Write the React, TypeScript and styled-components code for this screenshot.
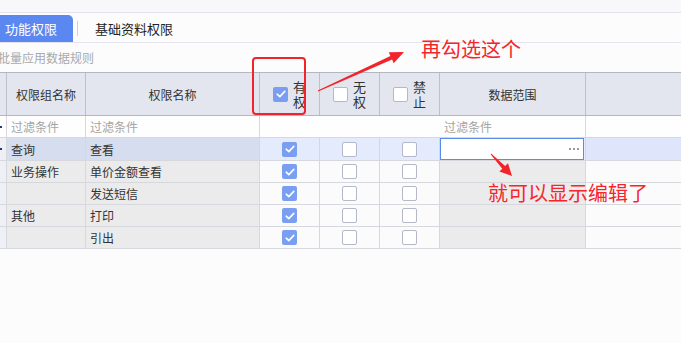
import React from 'react';
import styled, { createGlobalStyle } from 'styled-components';

const GlobalStyle = createGlobalStyle`
  html, body {
    margin: 0;
    padding: 0;
    background: #fcfcfc;
  }
  body {
    font-family: "Noto Sans CJK SC", "Noto Sans", "Liberation Sans", sans-serif;
    color: #333;
  }
`;

const COLS = '7px 79px 174px 60px 60px 60px 146px 1fr';

const Page = styled.div`
  position: relative;
  width: 681px;
  height: 343px;
  overflow: hidden;
  background: #fcfcfc;
`;

const TopStrip = styled.div`
  height: 12px;
  background: #f8f8fa;
  border-bottom: 1px solid #e2e3ec;
`;

const TabBar = styled.div`
  height: 29px;
  display: flex;
  align-items: flex-end;
  border-bottom: 1px solid #e4e5ee;
`;

const Tab = styled.div<{ $active?: boolean }>`
  height: 27px;
  display: flex;
  align-items: center;
  box-sizing: border-box;
  font-size: 13px;
  padding: ${p => (p.$active ? '0 0 0 5px' : '0 0 0 17px')};
  width: ${p => (p.$active ? '73px' : 'auto')};
  color: ${p => (p.$active ? '#fff' : '#222')};
  background: ${p => (p.$active ? '#5b88f0' : 'transparent')};
  border-top-right-radius: ${p => (p.$active ? '5px' : '0')};
`;

const TabDivider = styled.div`
  width: 1px;
  height: 15px;
  margin: 0 0 6px 4px;
  background: #cdd1dc;
`;

const Toolbar = styled.div`
  height: 29px;
  display: flex;
  align-items: center;
  font-size: 12px;
  color: #a9a9a9;
  margin-left: -2px;
`;

const Table = styled.div`
  border-top: 1px solid #b3b7c2;
`;

const HeaderRow = styled.div`
  display: grid;
  grid-template-columns: ${COLS};
  height: 43px;
  box-sizing: border-box;
  background: #e3e6ee;
  border-bottom: 1px solid #b3b7c2;
`;

const HeaderCell = styled.div`
  display: flex;
  align-items: center;
  justify-content: center;
  gap: 5px;
  font-size: 12px;
  color: #333;
  border-right: 1px solid #bcc0ca;
  &:last-child {
    border-right: none;
  }
`;

const StackedLabel = styled.span`
  width: 13px;
  font-size: 13px;
  line-height: 15px;
  word-break: break-all;
`;

type Tone = 'lead' | 'group' | 'check' | 'scope' | 'plain' | 'filter';

const toneBg: Record<Tone, [string, string]> = {
  lead: ['#eef0f5', '#eef0f5'],
  group: ['#ebebeb', '#d6ddef'],
  check: ['#fbfbfb', '#e4ebfc'],
  scope: ['#ebebeb', '#e4ebfc'],
  plain: ['#fbfbfb', '#dfe6fb'],
  filter: ['#fefefe', '#fefefe'],
};

const Row = styled.div<{ $height?: number }>`
  display: grid;
  grid-template-columns: ${COLS};
  height: ${p => p.$height ?? 22}px;
  box-sizing: border-box;
  border-bottom: 1px solid #d6d8de;
`;

const Cell = styled.div<{ $tone: Tone; $selected?: boolean; $open?: boolean; $center?: boolean }>`
  position: relative;
  display: flex;
  align-items: center;
  justify-content: ${p => (p.$center ? 'center' : 'flex-start')};
  padding-left: ${p => (p.$center ? '0' : '4px')};
  font-size: 12px;
  color: ${p => (p.$tone === 'filter' ? '#a4a4a4' : '#333')};
  background: ${p => toneBg[p.$tone][p.$selected ? 1 : 0]};
  border-right: 1px solid ${p => (p.$open ? 'transparent' : '#d6d8de')};
  &:last-child {
    border-right: none;
  }
`;

const Marker = styled.span`
  position: absolute;
  left: 0;
  top: 50%;
  width: 2px;
  height: 2px;
  margin-top: -1px;
  background: #1f3b74;
`;

const Box = styled.span<{ $checked?: boolean }>`
  box-sizing: border-box;
  width: 15px;
  height: 15px;
  border-radius: 2px;
  display: inline-flex;
  align-items: center;
  justify-content: center;
  background: ${p => (p.$checked ? '#7a9ef1' : '#fff')};
  border: ${p => (p.$checked ? 'none' : '1px solid #b4b8c8')};
`;

const ScopeInput = styled.div`
  position: absolute;
  inset: 0 1px 0 0;
  box-sizing: border-box;
  background: #fff;
  border: 1px solid #5b8ae8;
  display: flex;
  align-items: center;
  justify-content: flex-end;
  gap: 2px;
  padding-right: 4px;
`;

const Dot = styled.span`
  width: 2px;
  height: 2px;
  background: #9a9a9a;
`;

const Annotations = styled.div`
  position: absolute;
  inset: 0;
  pointer-events: none;
`;

const RedFrame = styled.div`
  position: absolute;
  left: 252px;
  top: 57px;
  width: 54px;
  height: 58px;
  box-sizing: border-box;
  border: 2px solid #f2232a;
  border-radius: 4px;
`;

const Note = styled.div<{ $left: number; $top: number }>`
  position: absolute;
  left: ${p => p.$left}px;
  top: ${p => p.$top}px;
  font-size: 20px;
  line-height: 24px;
  color: #f5262b;
  white-space: nowrap;
`;

const ArrowSvg = styled.svg`
  position: absolute;
  left: 0;
  top: 0;
`;

const Check = () => (
  <svg width="10" height="8" viewBox="0 0 10 8">
    <path d="M1.2 4.2 L3.8 6.6 L8.8 1.4" fill="none" stroke="#fff" strokeWidth="1.6" strokeLinecap="round" strokeLinejoin="round" />
  </svg>
);

const Checkbox = ({ checked }: { checked?: boolean }) => (
  <Box $checked={checked}>{checked && <Check />}</Box>
);

type Item = { group: string; name: string };

const items: Item[] = [
  { group: '查询', name: '查看' },
  { group: '业务操作', name: '单价金额查看' },
  { group: '', name: '发送短信' },
  { group: '其他', name: '打印' },
  { group: '', name: '引出' },
];

export default function App() {
  return (
    <Page>
      <GlobalStyle />
      <TopStrip />
      <TabBar>
        <Tab $active>功能权限</Tab>
        <TabDivider />
        <Tab>基础资料权限</Tab>
      </TabBar>
      <Toolbar>批量应用数据规则</Toolbar>
      <Table>
        <HeaderRow>
          <HeaderCell />
          <HeaderCell>权限组名称</HeaderCell>
          <HeaderCell>权限名称</HeaderCell>
          <HeaderCell>
            <Checkbox checked />
            <StackedLabel>有权</StackedLabel>
          </HeaderCell>
          <HeaderCell>
            <Checkbox />
            <StackedLabel>无权</StackedLabel>
          </HeaderCell>
          <HeaderCell>
            <Checkbox />
            <StackedLabel>禁止</StackedLabel>
          </HeaderCell>
          <HeaderCell>数据范围</HeaderCell>
          <HeaderCell />
        </HeaderRow>
        <Row $height={22}>
          <Cell $tone="filter"><Marker /></Cell>
          <Cell $tone="filter">过滤条件</Cell>
          <Cell $tone="filter">过滤条件</Cell>
          <Cell $tone="filter" $open />
          <Cell $tone="filter" $open />
          <Cell $tone="filter" $open />
          <Cell $tone="filter">过滤条件</Cell>
          <Cell $tone="filter" />
        </Row>
        {items.map((item, i) => {
          const sel = i === 0;
          return (
            <Row key={item.name} $height={i === 0 ? 23 : 22}>
              <Cell $tone="lead" $selected={sel}>{sel && <Marker />}</Cell>
              <Cell $tone="group" $selected={sel}>{item.group}</Cell>
              <Cell $tone="group" $selected={sel}>{item.name}</Cell>
              <Cell $tone="check" $selected={sel} $center><Checkbox checked /></Cell>
              <Cell $tone="check" $selected={sel} $center><Checkbox /></Cell>
              <Cell $tone="check" $selected={sel} $center><Checkbox /></Cell>
              <Cell $tone="scope" $selected={sel}>
                {sel && (
                  <ScopeInput>
                    <Dot />
                    <Dot />
                    <Dot />
                  </ScopeInput>
                )}
              </Cell>
              <Cell $tone="plain" $selected={sel} />
            </Row>
          );
        })}
      </Table>
      <Annotations>
        <RedFrame />
        <ArrowSvg width="681" height="343" viewBox="0 0 681 343">
          <polygon
            fill="#f2232a"
            points="318.2,91.5 392.1,59.6 393.7,63.3 404,52 388.8,52.3 390.4,56 317.8,90.5"
          />
          <polygon
            fill="#f2232a"
            points="490.6,154.3 502.3,168.7 499.4,171.4 512,176 508,163.2 505.1,165.9 491.4,153.7"
          />
        </ArrowSvg>
        <Note $left={421} $top={37}>再勾选这个</Note>
        <Note $left={488} $top={181}>就可以显示编辑了</Note>
      </Annotations>
    </Page>
  );
}
